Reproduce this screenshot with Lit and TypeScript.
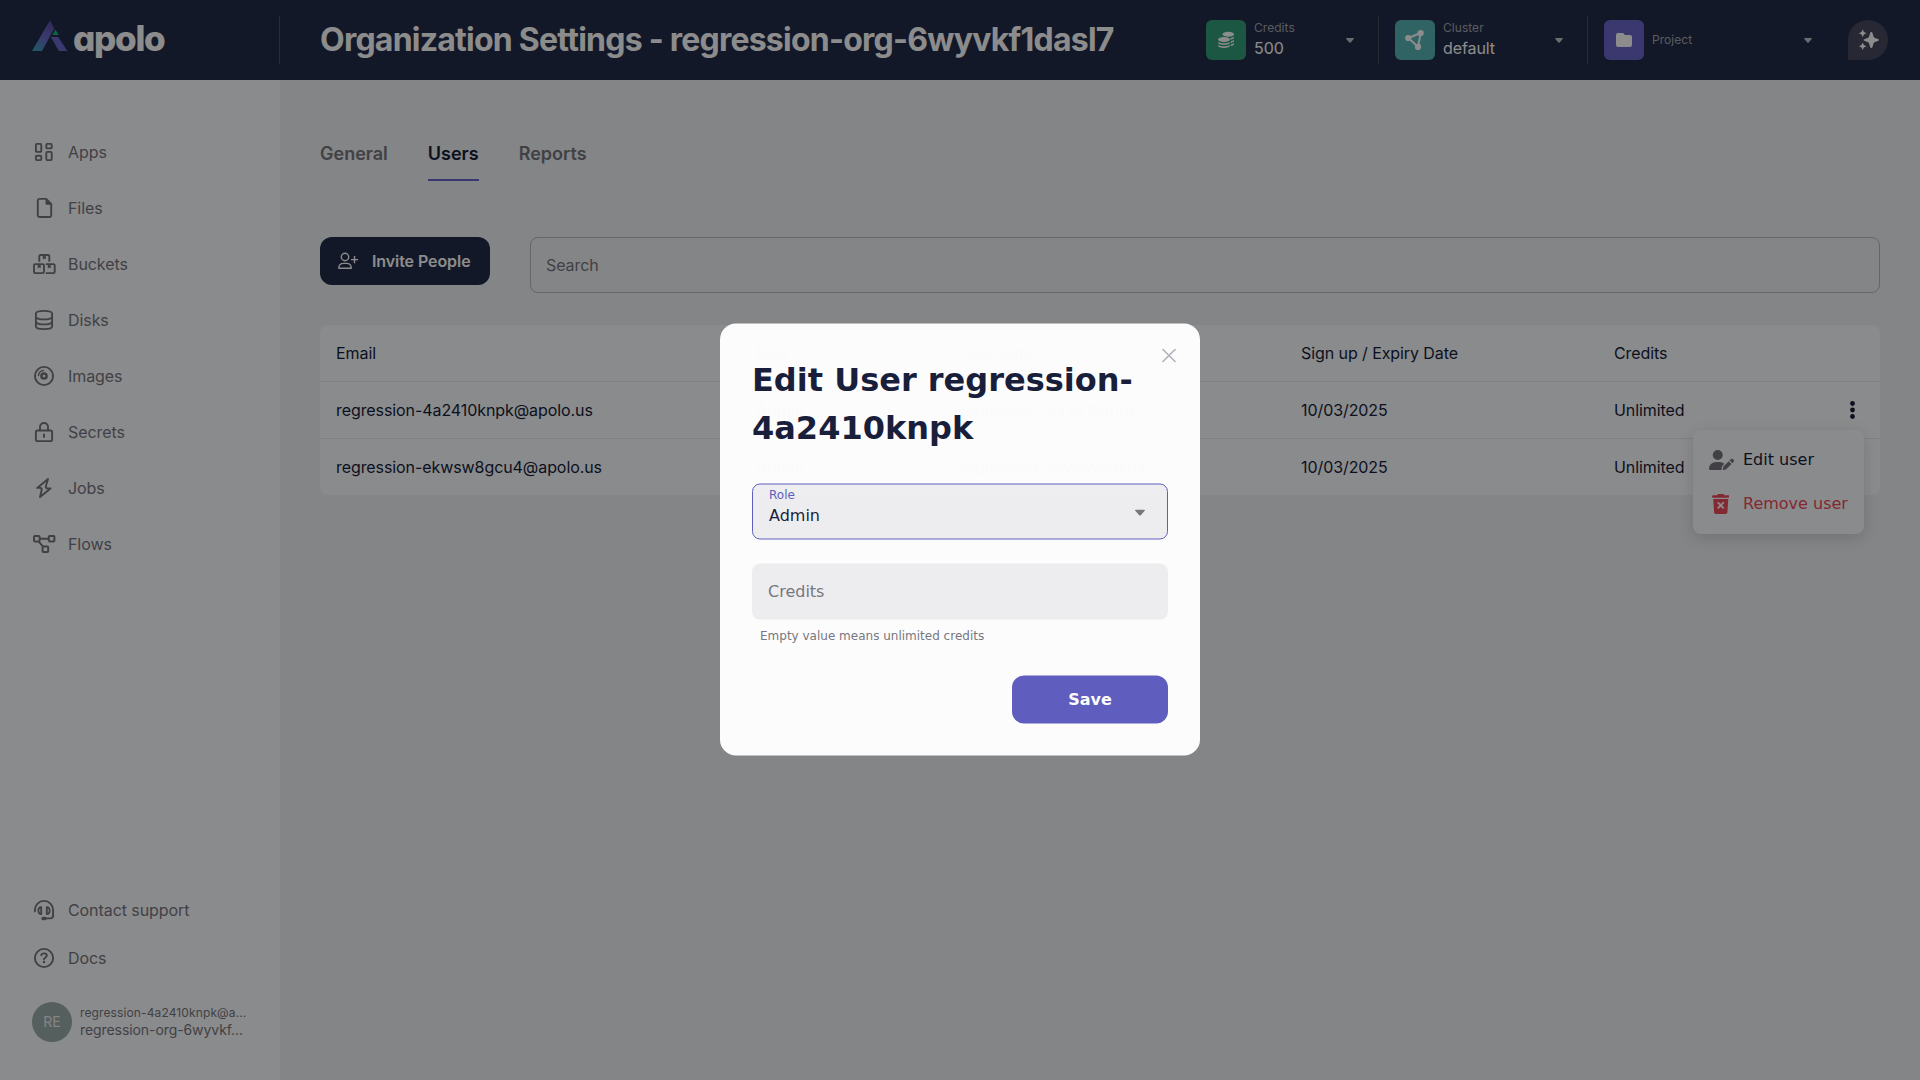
import { LitElement, html, svg, css } from "lit";
import { customElement } from "lit/decorators.js";

const icon = (vb: string, w: number, body: unknown, h = w) =>
  html`<svg viewBox=${vb} width=${w} height=${h} fill="none" aria-hidden="true">${body}</svg>`;

const NAV = [
  { label: "Apps", icon: svg`<g stroke="currentColor" stroke-width="1.900"><rect x="3.900" y="3.900" width="5.400" height="8" rx="1"/><rect x="14.300" y="3.900" width="5.400" height="4.500" rx="1"/><rect x="3.900" y="15.700" width="5.400" height="4.400" rx="1"/><rect x="14.300" y="11.900" width="5.400" height="8.200" rx="1"/></g>` },
  { label: "Files", icon: svg`<path d="M6.800 2.900h7.400l5 5v11.600a1.500 1.500 0 0 1-1.500 1.500H7.300a1.500 1.500 0 0 1-1.500-1.500V4.400a1.500 1.500 0 0 1 1.500-1.500Z" stroke="currentColor" stroke-width="1.900"/><path d="M13.500 2.500l6.200 6.200h-5a1.200 1.200 0 0 1-1.200-1.200Z" fill="currentColor"/>` },
  { label: "Buckets", icon: svg`<g stroke="currentColor" stroke-width="1.900"><path d="M7.300 9.800V4.300a1.300 1.300 0 0 1 1.300-1.300h7.400a1.300 1.300 0 0 1 1.300 1.300V9.800"/><path d="M3.300 12.100h7.400a1.300 1.300 0 0 1 1.300 1.300v6.400a1.300 1.300 0 0 1-1.300 1.300H3.300a1.300 1.300 0 0 1-1.300-1.300v-6.400a1.300 1.300 0 0 1 1.300-1.300Z"/><path d="M13.800 12.100h7.600a1.300 1.300 0 0 1 1.300 1.300v6.400a1.300 1.300 0 0 1-1.300 1.300h-7.600"/></g><path d="M10.800 3h3v4.500l-1.500-1-1.500 1ZM5.700 12h3v4.500l-1.500-1-1.500 1ZM15.800 12h3v4.500l-1.500-1-1.500 1Z" fill="currentColor"/>` },
  { label: "Disks", icon: svg`<g stroke="currentColor" stroke-width="1.900"><path d="M3.900 5.500C3.900 4 7.200 2.900 12 2.900S20.100 4 20.100 5.500v13c0 1.500-3.300 2.600-8.100 2.600s-8.100-1.100-8.100-2.600Z"/><path d="M3.900 9.200c1 1.400 4 2.200 8.100 2.200s7.100-.8 8.100-2.200M3.900 14.200c1 1.400 4 2.200 8.100 2.200s7.100-.8 8.100-2.200"/></g>` },
  { label: "Images", icon: svg`<circle cx="12" cy="12" r="9.100" stroke="currentColor" stroke-width="1.900"/><circle cx="12" cy="12" r="2.600" stroke="currentColor" stroke-width="2.500"/><path d="M6.500 11.500A5.300 5.300 0 0 1 11.500 6.500" stroke="currentColor" stroke-width="1.500" stroke-linecap="round"/>` },
  { label: "Secrets", icon: svg`<g stroke="currentColor" stroke-width="1.900" stroke-linecap="round"><rect x="3.900" y="10.500" width="16.200" height="10.600" rx="1.600"/><path d="M8 10.300V7a4 4 0 0 1 8 0v3.300M12 14.500v2.600"/></g>` },
  { label: "Jobs", icon: svg`<path d="M16 2.900 5.200 11.900h3.600l1 1.400L8 21.100l10.500-8.700h-3.800l-1-1.600Z" stroke="currentColor" stroke-width="1.900" stroke-linejoin="round"/>` },
  { label: "Flows", icon: svg`<g stroke="currentColor" stroke-width="2"><rect x="2" y="4" width="5.600" height="5.400" rx=".8"/><rect x="16.800" y="4" width="5.600" height="5.400" rx=".8"/><rect x="10.600" y="14.400" width="5.600" height="5.600" rx=".8"/><path d="M7.600 6.700h9.200M6.500 9.400l4.300 5"/></g>` },
];

const SUPPORT = svg`<g stroke="currentColor" stroke-width="1.900" stroke-linecap="round" stroke-linejoin="round"><path d="M2.900 13.300V12a9.100 9.100 0 0 1 18.200 0v5.600a2.800 2.800 0 0 1-2.800 2.800H12"/><path d="M9.200 9.200C7.500 9 6.300 10.700 6.300 12.600s1.200 3.500 2.900 3.400ZM14.800 9.200c1.700-.2 2.900 1.500 2.900 3.400s-1.200 3.500-2.900 3.400Z"/></g><rect x="9.300" y="18.800" width="5.400" height="3.400" rx="1.700" fill="currentColor"/>`;
const DOCS = svg`<circle cx="12" cy="12" r="9.100" stroke="currentColor" stroke-width="1.900"/><path d="M9.300 9.200c.2-1.300 1.200-1.800 2.700-1.800 1.700 0 2.800.8 2.800 2.100 0 1.800-2.800 2-2.800 3.700" stroke="currentColor" stroke-width="1.900" stroke-linecap="round"/><circle cx="12" cy="16.100" r="1.250" fill="currentColor"/>`;

const ROWS = [
  ["regression-4a2410knpk@apolo.us", "Admin", "regression-4a2410knpk", "10/03/2025", "Unlimited"],
  ["regression-ekwsw8gcu4@apolo.us", "Admin", "regression-ekwsw8gcu4", "10/03/2025", "Unlimited"],
];

@customElement("app-root")
export class AppRoot extends LitElement {
  static styles = css`
    :host { display: block; position: relative; width: 1920px; height: 1080px; overflow: hidden; font-family: Inter, sans-serif; font-size: 16px; line-height: 24px; letter-spacing: -.08px; color: #171d3a; background: #f0f2f4; }
    * { box-sizing: border-box; }
    svg { display: block; flex: none; }
    .page { display: flex; flex-direction: column; height: 1080px; }
    .header { height: 80px; background: #222c48; display: flex; align-items: center; color: #fff; flex: none; }
    .brand { width: 280px; height: 48px; padding: 4px 0 0 32px; border-right: 1px solid #4c5062; display: flex; align-items: flex-start; gap: 5px; }
    .logo { font-size: 35px; font-weight: 800; line-height: 37px; letter-spacing: -1.3px; font-feature-settings: "cv11"; }
    .title { margin: 0 auto 0 40px; font-size: 32px; font-weight: 700; line-height: 40px; letter-spacing: -.76px; white-space: nowrap; }
    .pick { height: 48px; display: flex; align-items: center; border-right: 1px solid #4c5062; }
    .pick.last { border: 0; }
    .tile { width: 40px; height: 40px; border-radius: 6px; display: flex; align-items: center; justify-content: center; }
    .green { background: #329e7b; } .teal { background: #58b5b5; } .violet { background: #6a67c9; }
    .ptext { margin-left: 8px; flex: 1; }
    .plabel { font-size: 12px; line-height: 16px; letter-spacing: .04px; color: #a5a7b0; }
    .pvalue { font-size: 16px; line-height: 24px; }
    .credits { width: 173px; } .cluster { width: 209px; padding-left: 16px; } .project { width: 228px; padding-left: 16px; }
    .caret { margin-right: 24px; }
    .last .caret { margin-right: 4px; }
    .spark { width: 40px; height: 40px; border-radius: 20px 20px 20px 0; background: #474a60; margin: 0 32px; display: flex; align-items: center; justify-content: center; }
    .body { display: flex; flex: 1; min-height: 0; }
    .side { width: 280px; background: #fcfdff; padding: 44px 32px 38px; display: flex; flex-direction: column; color: #77777f; }
    .item { height: 56px; display: flex; align-items: center; gap: 12px; }
    .foot { margin-top: auto; }
    .foot .item { height: 48px; }
    .me { display: flex; gap: 8px; align-items: center; margin-top: 20px; height: 40px; }
    .avatar { width: 40px; height: 40px; border-radius: 50%; background: #9badac; color: #f0f1f3; display: flex; align-items: center; justify-content: center; font-size: 14px; }
    .me1 { font-size: 12px; line-height: 16px; letter-spacing: .12px; white-space: nowrap; }
    .me2 { font-size: 14px; line-height: 18px; letter-spacing: -.08px; white-space: nowrap; }
    .main { flex: 1; padding: 60px 40px; }
    .tabs { display: flex; gap: 40px; font-size: 18px; font-weight: 600; letter-spacing: 0; color: #77777f; }
    .tab { height: 41px; line-height: 28px; border-bottom: 2px solid transparent; }
    .tab.on { color: #171d3a; border-color: #6a67c9; }
    .tools { display: flex; gap: 40px; margin-top: 56px; }
    .invite { width: 170px; height: 48px; border-radius: 12px; background: #222c48; color: #fff; font-weight: 600; display: flex; align-items: center; padding-left: 17px; gap: 13px; white-space: nowrap; }
    .search { flex: 1; height: 56px; border: 1px solid #b9bac0; border-radius: 8px; padding: 0 15px; display: flex; align-items: center; color: #77777f; }
    .table { margin-top: 32px; background: #fcfdff; border-radius: 8px; }
    .row { display: grid; grid-template-columns: 420px 204px 341px 313px 1fr auto; height: 57px; padding: 0 16px; align-items: center; border-bottom: 1px solid #e9e9ec; }
    .row:last-child { border: 0; height: 56px; }
    .dots { padding-right: 9px; }
    .menu { position: absolute; left: 1693px; top: 430px; width: 171px; height: 104px; border-radius: 8px; background: #fcfdff; box-shadow: 0 4px 16px rgba(0, 0, 0, .14); padding: 8px 16px; font-family: "DejaVu Sans", sans-serif; letter-spacing: 0; }
    .opt { display: flex; height: 44px; gap: 9px; align-items: center; color: #77777f; white-space: nowrap; }
    .opt span { color: #171d3a; }
    .opt.red, .opt.red span { color: #ed4b5a; }
    .icell { width: 25px; display: flex; justify-content: center; }
    .red .icell { padding-right: 2px; }
    .shade { position: absolute; inset: 0; background: rgba(0, 0, 0, .45); display: flex; align-items: center; justify-content: center; }
    .modal { position: relative; width: 480px; height: 432px; transform: translateY(-.5px); background: #fff; border-radius: 16px; opacity: .98; padding: 32px; font-family: "DejaVu Sans", sans-serif; letter-spacing: 0; }
    .close { position: absolute; right: 24.5px; top: 25px; color: #b4b5bc; }
    h2 { margin: 0; font-size: 32px; line-height: 48px; font-weight: 700; }
    .select { margin-top: 32px; height: 56px; border: 1px solid #5f5dc0; border-radius: 8px; background: #f0f0f2; padding: 2px 22px 0 16px; display: flex; justify-content: space-between; }
    .slabel { font-size: 12px; line-height: 16px; color: #5f5dc0; }
    .svalue { line-height: 24px; margin-top: 1px; }
    .arrow { margin-top: 23px; }
    .input { margin-top: 24px; height: 56px; border-radius: 8px; background: #f0f0f2; padding: 0 16px; display: flex; align-items: center; color: #77777f; }
    .hint { font-size: 12px; line-height: 16px; color: #77777f; margin: 8px 0 0 8px; }
    .save { margin: 32px 0 0 auto; width: 156px; height: 48px; border-radius: 12px; background: #5f5dc0; color: #fff; font-weight: 700; display: flex; align-items: center; justify-content: center; }
  `;

  render() {
    return html`
      <div class="page">
        <header class="header">
          <div class="brand">${this.logo()}</div>
          <div class="title">Organization Settings - regression-org-6wyvkf1dasl7</div>
          <div class="pick credits">
            <div class="tile green">${icon("0 0 18 18", 18, svg`<g fill="#fff"><ellipse cx="11.300" cy="3.200" rx="5.700" ry="2.500"/><ellipse cx="7" cy="8.600" rx="5.900" ry="2.500"/><path d="M1.200 11c1.500 1.700 10 1.700 11.600 0v1.300c-1.500 2-10 2-11.600 0ZM1.200 14c1.500 1.700 10 1.700 11.600 0v1.200c-1.500 2.300-10 2.300-11.600 0ZM13.500 7c1.500-.2 3-.8 3.500-1.500v1.300c-.3 1-2 1.700-3.500 1.900ZM13.800 10.200c1.200-.2 2.800-.8 3.200-1.500v1.300c-.3 1-2 1.700-3.200 1.900ZM13.800 13.400c1.200-.2 2.800-.8 3.200-1.500v1.300c-.3 1-2 1.700-3.200 1.900Z"/></g>`)}</div>
            <div class="ptext"><div class="plabel">Credits</div><div class="pvalue">500</div></div>${this.caret()}
          </div>
          <div class="pick cluster">
            <div class="tile teal">${icon("0 0 20 20", 20, svg`<path d="M3.500 8 15.700 3 13 17Z" stroke="#fff" stroke-width="2"/><g fill="#fff"><circle cx="3.200" cy="8" r="3.100"/><circle cx="15.700" cy="3.100" r="3.100"/><circle cx="13" cy="16.900" r="3.100"/></g>`)}</div>
            <div class="ptext"><div class="plabel">Cluster</div><div class="pvalue">default</div></div>${this.caret()}
          </div>
          <div class="pick project last">
            <div class="tile violet">${icon("0 0 16 14", 16, svg`<path d="M2 0h4.500q.8 0 1.300.6l.6.800q.5.600 1.300.6H14a2 2 0 0 1 2 2v8a2 2 0 0 1-2 2H2a2 2 0 0 1-2-2V2a2 2 0 0 1 2-2Z" fill="#fff"/>`, 14)}</div>
            <div class="ptext"><div class="plabel">Project</div></div>${this.caret()}
          </div>
          <div class="spark">${icon("0 0 22 22", 22, svg`<path d="M14.300 3q.9 0 1.100.7l1.300 4.200q.3.700.9.900l3.700 1.500q.7.300.7.700t-.7.700l-3.700 1.500q-.6.200-.9.900l-1.300 4.200q-.2.700-1.100.7t-1.100-.7l-1.300-4.200q-.3-.7-.9-.9L7.300 11.700Q6.600 11.400 6.600 11t.7-.7L11 8.800q.6-.2.900-.9l1.300-4.200Q13.400 3 14.300 3Z" fill="#fff"/><g fill="#fff"><path d="M5.700.5 6.900 3.100 9.500 4.300 6.900 5.500 5.700 8.100 4.500 5.500 1.900 4.300 4.500 3.100ZM5.700 13.500 6.900 16.100 9.500 17.300 6.900 18.500 5.700 21.100 4.500 18.500 1.900 17.300 4.500 16.100Z"/></g>`)}</div>
        </header>
        <div class="body">
          <nav class="side">
            ${NAV.map((n) => html`<div class="item">${icon("0 0 24 24", 24, n.icon)}<span>${n.label}</span></div>`)}
            <div class="foot">
              <div class="item">${icon("0 0 24 24", 24, SUPPORT)}<span>Contact support</span></div>
              <div class="item">${icon("0 0 24 24", 24, DOCS)}<span>Docs</span></div>
              <div class="me"><div class="avatar">RE</div><div><div class="me1">regression-4a2410knpk@a...</div><div class="me2">regression-org-6wyvkf...</div></div></div>
            </div>
          </nav>
          <main class="main">
            <div class="tabs"><div class="tab">General</div><div class="tab on">Users</div><div class="tab">Reports</div></div>
            <div class="tools">
              <div class="invite">${icon("0 0 22 20", 22, svg`<g stroke="#fff" stroke-width="1.400"><circle cx="8" cy="6" r="3.700"/><path d="M1.800 17.300c0-3 2-4.900 4.800-4.900h2.900c2.800 0 4.800 1.900 4.800 4.900Z" stroke-linejoin="round"/><path d="M17.500 5v7.200M13.900 8.600h7.200"/></g>`, 20)}<span>Invite People</span></div>
              <div class="search">Search</div>
            </div>
            <div class="table">
              <div class="row"><span>Email</span><span>Role</span><span>Username</span><span>Sign up / Expiry Date</span><span>Credits</span></div>
              ${ROWS.map((r, i) => html`<div class="row">${r.map((c) => html`<span>${c}</span>`)}${i === 0 ? html`<span class="dots">${icon("0 0 5 18", 5, svg`<g fill="#171d3a"><circle cx="2.500" cy="2.500" r="2.400"/><circle cx="2.500" cy="9" r="2.400"/><circle cx="2.500" cy="15.500" r="2.400"/></g>`, 18)}</span>` : ""}</div>`)}
            </div>
          </main>
        </div>
      </div>
      <div class="menu">
        <div class="opt"><div class="icell">${icon("0 0 640 512", 25, svg`<path fill="currentColor" d="M224 256a128 128 0 1 0 0-256 128 128 0 1 0 0 256zm-45.700 48C79.800 304 0 383.800 0 482.300 0 498.700 13.300 512 29.700 512h293.100c-3.100-8.800-3.700-18.400-1.400-27.800l15-60.100c2.800-11.300 8.600-21.500 16.800-29.700l40.300-40.300C361.400 323.100 317.900 304 269.700 304h-91.400zM613.800 235.700c-15.600-15.600-40.900-15.600-56.600 0l-29.400 29.400 71 71 29.400-29.400c15.600-15.600 15.600-40.900 0-56.600l-14.400-14.400zM375.900 417c-4.100 4.100-7 9.200-8.400 14.900l-15 60.100c-1.400 5.500.2 11.200 4.200 15.200s9.700 5.600 15.200 4.200l60.100-15c5.600-1.400 10.800-4.300 14.900-8.400l129.200-129.300-71-71L375.900 417z"/>`, 20)}</div><span>Edit user</span></div>
        <div class="opt red"><div class="icell">${icon("0 0 448 512", 17.5, svg`<path fill="currentColor" fill-rule="evenodd" d="M135 18c6-11 17-18 29-18h120c12 0 23 7 29 18l7 14h96a32 32 0 1 1 0 64H32a32 32 0 1 1 0-64h96l7-14ZM32 128h384l-21 339c-2 25-23 45-48 45H101c-25 0-46-20-48-45L32 128Zm111 81c-9 9-9 25 0 34l47 47-47 47c-9 9-9 25 0 34s25 9 34 0l47-47 47 47c9 9 25 9 34 0s9-25 0-34l-47-47 47-47c9-9 9-25 0-34s-25-9-34 0l-47 47-47-47c-9-9-25-9-34 0Z"/>`, 20)}</div><span>Remove user</span></div>
      </div>
      <div class="shade">
        <div class="modal">
          <div class="close">${icon("0 0 14 14", 14, svg`<path d="m1 1 12 12M13 1 1 13" stroke="currentColor" stroke-width="1.700" stroke-linecap="round"/>`)}</div>
          <h2>Edit User regression-4a2410knpk</h2>
          <div class="select"><div><div class="slabel">Role</div><div class="svalue">Admin</div></div><div class="arrow">${icon("0 0 10 7", 10, svg`<path d="M1 0h8q1.500.2.700 1.300L5.800 5.700q-.8.800-1.600 0L.3 1.300Q-.5.200 1 0Z" fill="#77777f"/>`, 7)}</div></div>
          <div class="input">Credits</div>
          <div class="hint">Empty value means unlimited credits</div>
          <div class="save">Save</div>
        </div>
      </div>`;
  }

  caret() {
    return html`<div class="caret">${icon("0 0 8 5", 8, svg`<path d="M.8 0h6.400q1.200.1.500 1.100L4.700 4.500q-.7.600-1.400 0L.3 1.100Q-.4.100.8 0Z" fill="#c4c5ca"/>`, 5)}</div>`;
  }

  logo() {
    return html`${icon("0 0 36 32", 36, svg`<defs><linearGradient id="a" x1="0" y1="1" x2=".6" y2="0"><stop offset="0" stop-color="#35a5b8"/><stop offset=".6" stop-color="#6a67c9"/><stop offset="1" stop-color="#5b54a8"/></linearGradient></defs><path d="M18 .3l4.300 8.200-2.200 4L10 31H0Z" fill="url(#a)"/><path d="M18.800 17h7.400L35.500 31h-8.600Z" fill="#6a67c9"/><path d="M23.500 9.500l3.200 5.500h-6.400Z" fill="#14b87c"/>`, 32)}<span class="logo">apolo</span>`;
  }
}
